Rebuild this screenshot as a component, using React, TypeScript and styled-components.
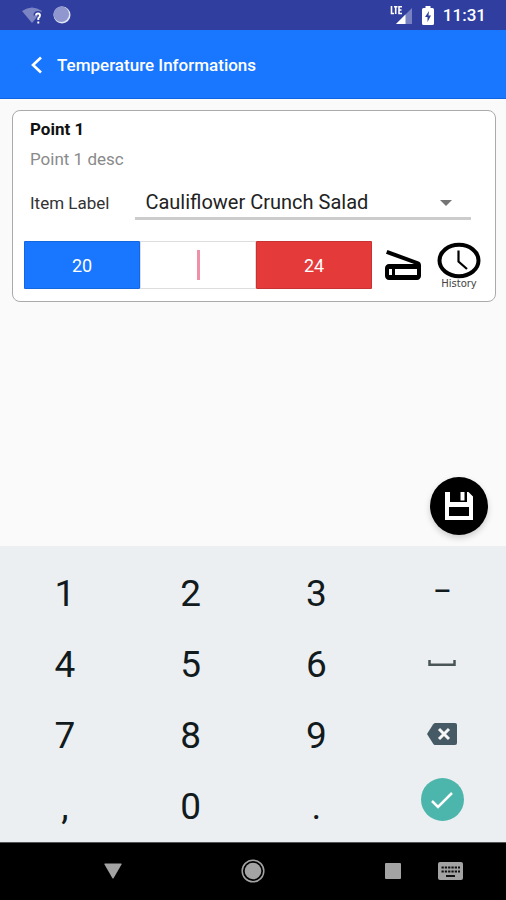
import React, { useState } from "react";
import styled, { createGlobalStyle } from "styled-components";

const GlobalStyle = createGlobalStyle`
  *, *::before, *::after { box-sizing: border-box; }
  body { margin: 0; background: #fafafa; font-family: Roboto, "Liberation Sans", sans-serif; }
  button, input, select { font-family: inherit; margin: 0; padding: 0; border: 0; background: none; color: inherit; }
  button { cursor: pointer; }
  svg { display: block; }
`;

const Screen = styled.div`
  display: flex;
  flex-direction: column;
  min-height: 100vh;
`;

const StatusBar = styled.div`
  display: flex;
  justify-content: space-between;
  align-items: center;
  height: 30px;
  padding: 0 20px 0 22px;
  background: #303f9f;
  color: #fff;
`;

const StatusGroup = styled.div<{ $gap: number }>`
  display: flex;
  align-items: center;
  gap: ${(p) => p.$gap}px;
`;

const Clock = styled.span`
  font-size: 17px;
  font-weight: 500;
  line-height: 20px;
`;

const AppBar = styled.header`
  display: flex;
  align-items: center;
  gap: 12px;
  height: 69px;
  padding: 2px 28px 0;
  background: #1976ff;
  border-bottom: 1px solid #1263e2;
  color: #fff;
`;

const Title = styled.h1`
  margin: 0;
  font-size: 17px;
  font-weight: 500;
  line-height: 24px;
`;

const Content = styled.main`
  position: relative;
  flex: 1;
  padding: 11px 10px 0 12px;
`;

const Card = styled.section`
  padding: 8px 14px 12px 11px;
  background: #fff;
  border: 1px solid #aaa;
  border-radius: 8px;
`;

const CardText = styled.div`
  padding: 0 10px 0 6px;
`;

const PointName = styled.h2`
  margin: 0;
  font-size: 17px;
  font-weight: 700;
  line-height: 20px;
  color: #111;
`;

const PointDesc = styled.p`
  margin: 10px 0 0;
  font-size: 17px;
  line-height: 20px;
  color: #8a8a8a;
`;

const Field = styled.div`
  display: flex;
  align-items: center;
  gap: 26px;
  margin-top: 16px;
`;

const FieldLabel = styled.label`
  flex: none;
  font-size: 17px;
  line-height: 20px;
  color: #333;
`;

const SelectBox = styled.div`
  position: relative;
  flex: 1;
  border-bottom: 3px solid #ccc;
`;

const Select = styled.select`
  display: block;
  width: 100%;
  height: 32px;
  padding: 2px 0 0 10px;
  appearance: none;
  outline: none;
  font-size: 20px;
  color: #222;
`;

const SelectArrow = styled.svg`
  position: absolute;
  right: 19px;
  top: 15px;
  pointer-events: none;
`;

const Readings = styled.div`
  display: flex;
  align-items: center;
  margin-top: 21px;
`;

const Limits = styled.div`
  display: grid;
  grid-template-columns: repeat(3, 1fr);
  flex: 1;
  height: 48px;
`;

const Limit = styled.output<{ $color: string }>`
  display: flex;
  align-items: center;
  justify-content: center;
  background: ${(p) => p.$color};
  border: 1px solid rgba(0, 0, 0, 0.12);
  color: #fff;
  font-size: 18px;
  border-radius: 1px;
`;

const ReadingBox = styled.div`
  position: relative;
  border: 1px solid #ddd;
`;

const ReadingInput = styled.input`
  width: 100%;
  height: 100%;
  text-align: center;
  font-size: 18px;
  outline: none;
  caret-color: #f06b8b;
`;

const Caret = styled.span`
  position: absolute;
  inset: 8px 0;
  width: 3px;
  margin: 0 auto;
  background: #ef8fa8;
  pointer-events: none;
`;

const ScanButton = styled.button`
  margin-left: 13px;
`;

const HistoryButton = styled.button`
  display: flex;
  flex-direction: column;
  align-items: center;
  width: 44px;
  margin-left: 16px;
  font-size: 10px;
  line-height: 10px;
  font-family: "DejaVu Sans", sans-serif;
  color: #444;
`;

const SaveButton = styled.button`
  position: absolute;
  right: 18px;
  bottom: 11px;
  display: flex;
  align-items: center;
  justify-content: center;
  width: 58px;
  height: 58px;
  border-radius: 50%;
  background: #000;
  box-shadow: 0 3px 6px rgba(0, 0, 0, 0.18);
`;

const Keypad = styled.div`
  display: grid;
  grid-template-columns: repeat(4, 1fr);
  grid-auto-rows: 71px;
  padding: 12px 1px 0 2px;
  background: #eceff1;
`;

const Key = styled.button`
  display: flex;
  align-items: center;
  justify-content: center;
  font-size: 37px;
  line-height: 44px;
  color: #111a1c;
`;

const ActionKey = styled(Key)`
  padding-bottom: 4px;
  font-size: 28px;
  font-weight: 500;
`;

const DoneKey = styled(Key)`
  padding-bottom: 14px;
`;

const DoneCircle = styled.span`
  display: flex;
  align-items: center;
  justify-content: center;
  width: 43px;
  height: 43px;
  border-radius: 50%;
  background: #4db6ac;
`;

const NavBar = styled.nav`
  display: grid;
  grid-template-columns: 43fr 140fr 140fr 41fr 58fr 56fr 28fr;
  height: 58px;
  padding-bottom: 2px;
  background: #000;
  border-top: 1px solid #555;
`;

const NavButton = styled.button<{ $column: number }>`
  grid-column: ${(p) => p.$column};
  grid-row: 1;
  display: flex;
  align-items: center;
  justify-content: center;
`;

const WifiIcon = () => (
  <svg width="20" height="17" viewBox="0 0 20 17" aria-hidden="true">
    <path d="M0 4Q10-3 20 4L10 16Z" fill="#7c85c4" />
    <path d="M13.500 8.500Q13.500 6 16 6T18.500 8.500Q18.500 10 16.500 11.500V13M16.500 14.500V16" fill="none" stroke="#303f9f" strokeWidth="4" />
    <path d="M14 8.500Q14 6.500 16 6.500T18 8.500Q18 10 16.300 11.300V13M16.300 14.500V16.500" fill="none" stroke="#fff" strokeWidth="1.900" />
  </svg>
);

const SyncIcon = () => (
  <svg width="18" height="18" viewBox="0 0 18 18" aria-hidden="true">
    <circle cx="9" cy="9" r="8.500" fill="#e4e7f6" />
    <circle cx="8.300" cy="8.300" r="7.800" fill="#8f97ce" />
  </svg>
);

const SignalIcon = () => (
  <svg width="23" height="19" viewBox="0 0 23 19" aria-hidden="true">
    <path d="M22 2V18H6Z" fill="#7881c1" />
    <path d="M15.500 8.500V18H6Z" fill="#fff" />
    <path d="M1.500 0V7.500H4M4 .8H7.500M5.700 .8V8M12 .8H9V7.500H12M9 4H11.500" fill="none" stroke="#fff" strokeWidth="1.600" />
  </svg>
);

const BatteryIcon = () => (
  <svg width="12" height="19" viewBox="0 0 12 19" aria-hidden="true">
    <path d="M3.500 0H8.500V2H10.500Q12 2 12 3.500V17.500Q12 19 10.500 19H1.500Q0 19 0 17.500V3.500Q0 2 1.500 2H3.500Z" fill="#fff" />
    <path d="M7 5L3 11H5.500V16L9 9.500H6.500Z" fill="#303f9f" />
  </svg>
);

const BackIcon = () => (
  <svg width="17" height="18" viewBox="0 0 17 18" fill="none" stroke="#fff" strokeWidth="2.600" aria-hidden="true">
    <path d="M13 1.500L5 9L13 16.500" />
  </svg>
);

const ScannerIcon = () => (
  <svg width="36" height="34" viewBox="3 4 18 17" aria-hidden="true">
    <path
      fillRule="evenodd"
      d="M19.800 10.700L4.200 5l-.7 1.900L17.600 12H5c-1.100 0-2 .9-2 2v4c0 1.100.9 2 2 2h14c1.100 0 2-.9 2-2v-5.500c0-.8-.5-1.600-1.200-1.800zM6.500 17.500H5v-3h1.500v3zm12.500 0H8v-3h11v3z"
    />
  </svg>
);

const HistoryIcon = () => (
  <svg width="44" height="37" viewBox="0 0 44 37" fill="none" stroke="#000" aria-hidden="true">
    <ellipse cx="22" cy="18.500" rx="19.500" ry="15.700" strokeWidth="4" />
    <path d="M21.500 8.500V19.500L30 27" strokeWidth="2.200" />
  </svg>
);

const SaveIcon = () => (
  <svg width="28" height="28" viewBox="0 0 28 28" aria-hidden="true">
    <path fillRule="evenodd" fill="#fff" d="M0 0H5V10H22V0H23.500L28 4.500V28H0ZM4 15H24V24H4Z" />
    <path fill="#fff" d="M15.500 0H19.500V8.500H15.500Z" />
  </svg>
);

const SpaceIcon = () => (
  <svg width="28" height="6" viewBox="0 0 28 6" fill="none" aria-hidden="true">
    <path d="M1.500 0V4.700H26.500V0" stroke="#4a5558" strokeWidth="2.500" />
  </svg>
);

const BackspaceIcon = () => (
  <svg width="30" height="22" viewBox="0 0 30 22" aria-hidden="true">
    <path d="M8 0H28Q30 0 30 2V20Q30 22 28 22H8Q7 22 6 20.500L0 11L6 1.500Q7 0 8 0Z" fill="#455a64" />
    <path d="M12 6L22 16M22 6L12 16" stroke="#f4f6f7" strokeWidth="3" />
  </svg>
);

const CheckIcon = () => (
  <svg width="22" height="18" viewBox="0 0 22 18" fill="none" aria-hidden="true">
    <path d="M1 10L7 16L21 2" stroke="#fff" strokeWidth="2.500" />
  </svg>
);

const BackNavIcon = () => (
  <svg width="18" height="16" viewBox="0 0 18 16" aria-hidden="true">
    <path d="M1 .5H17Q18 .5 17.500 1.500L9.700 15Q9 16 8.300 15L.5 1.500Q0 .5 1 .5Z" fill="#a3a3a3" />
  </svg>
);

const HomeNavIcon = () => (
  <svg width="24" height="24" viewBox="0 0 24 24" aria-hidden="true">
    <circle cx="12" cy="12" r="10.800" fill="none" stroke="#a3a3a3" strokeWidth="1.500" />
    <circle cx="12" cy="12" r="8.300" fill="#a3a3a3" />
  </svg>
);

const RecentsNavIcon = () => (
  <svg width="16" height="16" viewBox="0 0 16 16" aria-hidden="true">
    <rect width="16" height="16" rx="1" fill="#a3a3a3" />
  </svg>
);

const KeyboardNavIcon = () => (
  <svg width="25" height="18" viewBox="0 0 25 18" aria-hidden="true">
    <rect width="25" height="18" rx="2" fill="#a3a3a3" />
    <path d="M3.500 5.500H22M3.500 9.500H22" stroke="#111" strokeWidth="2" strokeDasharray="2.300 1" />
    <path d="M8 14H17" stroke="#111" strokeWidth="2" />
  </svg>
);

export default function App() {
  const [reading, setReading] = useState("");
  const type = (key: string) => setReading((r) => r + key);
  const digit = (key: string) => (
    <Key type="button" onClick={() => type(key)}>{key}</Key>
  );

  return (
    <Screen>
      <GlobalStyle />
      <StatusBar>
        <StatusGroup $gap={11}>
          <WifiIcon />
          <SyncIcon />
        </StatusGroup>
        <StatusGroup $gap={9}>
          <SignalIcon />
          <BatteryIcon />
          <Clock>11:31</Clock>
        </StatusGroup>
      </StatusBar>
      <AppBar>
        <button type="button" aria-label="Back"><BackIcon /></button>
        <Title>Temperature Informations</Title>
      </AppBar>
      <Content>
        <Card>
          <CardText>
            <PointName>Point 1</PointName>
            <PointDesc>Point 1 desc</PointDesc>
            <Field>
              <FieldLabel htmlFor="item">Item Label</FieldLabel>
              <SelectBox>
                <Select id="item">
                  <option>Cauliflower Crunch Salad</option>
                </Select>
                <SelectArrow width="12" height="6" viewBox="0 0 12 6" aria-hidden="true">
                  <path d="M0 0H12L6 6Z" fill="#757575" />
                </SelectArrow>
              </SelectBox>
            </Field>
          </CardText>
          <Readings>
            <Limits>
              <Limit $color="#1976ff" aria-label="Minimum">20</Limit>
              <ReadingBox>
                <ReadingInput
                  aria-label="Temperature"
                  inputMode="decimal"
                  value={reading}
                  onChange={(e) => setReading(e.target.value)}
                />
                {reading === "" && <Caret />}
              </ReadingBox>
              <Limit $color="#e53a3a" aria-label="Maximum">24</Limit>
            </Limits>
            <ScanButton type="button" aria-label="Scan"><ScannerIcon /></ScanButton>
            <HistoryButton type="button"><HistoryIcon />History</HistoryButton>
          </Readings>
        </Card>
        <SaveButton type="button" aria-label="Save"><SaveIcon /></SaveButton>
      </Content>
      <Keypad>
        {digit("1")}
        {digit("2")}
        {digit("3")}
        <ActionKey type="button" onClick={() => type("-")}>–</ActionKey>
        {digit("4")}
        {digit("5")}
        {digit("6")}
        <ActionKey type="button" aria-label="Space" onClick={() => type(" ")}><SpaceIcon /></ActionKey>
        {digit("7")}
        {digit("8")}
        {digit("9")}
        <ActionKey type="button" aria-label="Delete" onClick={() => setReading((r) => r.slice(0, -1))}>
          <BackspaceIcon />
        </ActionKey>
        {digit(",")}
        {digit("0")}
        {digit(".")}
        <DoneKey type="button" aria-label="Done"><DoneCircle><CheckIcon /></DoneCircle></DoneKey>
      </Keypad>
      <NavBar>
        <NavButton $column={2} type="button" aria-label="Hide keyboard"><BackNavIcon /></NavButton>
        <NavButton $column={3} type="button" aria-label="Home"><HomeNavIcon /></NavButton>
        <NavButton $column={5} type="button" aria-label="Recent apps"><RecentsNavIcon /></NavButton>
        <NavButton $column={6} type="button" aria-label="Change keyboard"><KeyboardNavIcon /></NavButton>
      </NavBar>
    </Screen>
  );
}
